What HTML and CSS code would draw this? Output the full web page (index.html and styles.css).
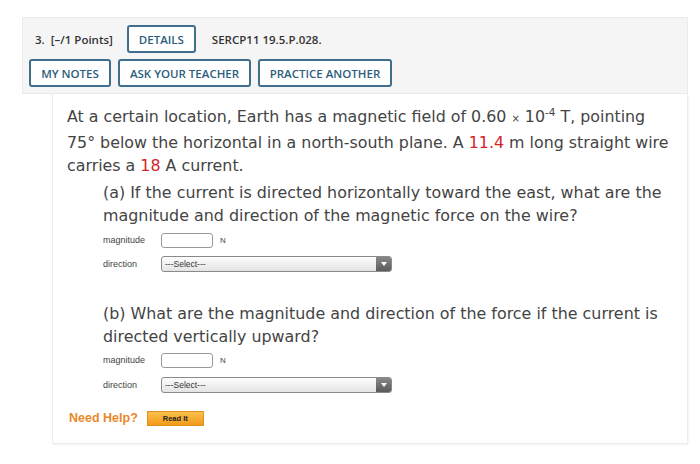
FILE: index.html
```html
<!DOCTYPE html>
<html>
<head>
<meta charset="utf-8">
<link rel="stylesheet" href="styles.css">
</head>
<body>
<div class="question">
  <div class="qhead">
    <div class="row1">
      <span class="qnum">3.</span>
      <span class="points">[&ndash;/1 Points]</span>
      <span class="btn details">DETAILS</span>
      <span class="code">SERCP11 19.5.P.028.</span>
    </div>
    <div class="row2">
      <span class="btn notes">MY NOTES</span>
      <span class="btn ask">ASK YOUR TEACHER</span>
      <span class="btn practice">PRACTICE ANOTHER</span>
    </div>
  </div>
  <div class="qbody">
    <p class="stem">At a certain location, Earth has a magnetic field of 0.60 <span class="times">&times;</span> 10<sup>-4</sup> T, pointing 75&deg; below the horizontal in a north-south plane. A <span class="red">11.4</span> m long straight wire carries a <span class="red">18</span> A current.</p>
    <div class="part">
      <p class="ptext">(a) If the current is directed horizontally toward the east, what are the magnitude and direction of the magnetic force on the wire?</p>
      <div class="field"><span class="lbl">magnitude</span><span class="input"></span><span class="unit">N</span></div>
      <div class="field"><span class="lbl">direction</span><span class="select"><span class="seltext">---Select---</span><span class="arrow"><svg width="6" height="5" viewBox="0 0 6 5"><path d="M0 0H6L3 4Z" fill="#fff"/></svg></span></span></div>
    </div>
    <div class="part partb">
      <p class="ptext">(b) What are the magnitude and direction of the force if the current is directed vertically upward?</p>
      <div class="field"><span class="lbl">magnitude</span><span class="input"></span><span class="unit">N</span></div>
      <div class="field"><span class="lbl">direction</span><span class="select"><span class="seltext">---Select---</span><span class="arrow"><svg width="6" height="5" viewBox="0 0 6 5"><path d="M0 0H6L3 4Z" fill="#fff"/></svg></span></span></div>
    </div>
    <div class="help"><span class="needhelp">Need Help?</span><span class="readit">Read It</span></div>
  </div>
</div>
</body>
</html>
```
FILE: styles.css
```css
html, body { margin: 0; padding: 0; background: #fff; }
body { width: 700px; height: 464px; overflow: hidden; }
.question { margin: 17px 12px 0 22px; }
.qhead {
  background: #f5f5f5;
  border: 1px solid #ebebeb;
  padding: 7px 6px 6px 6px;
  font-family: "Open Sans", sans-serif;
  font-weight: 600;
  font-size: 11.5px;
  color: #333;
}
.row1 { display: flex; align-items: center; height: 28px; }
.qnum { margin-left: 6px; }
.points { margin-left: 6px; }
.details { margin-left: 14px; }
.code { margin-left: 16px; }
.row2 { display: flex; align-items: center; gap: 7px; margin-top: 6px; }
.btn {
  display: inline-flex; align-items: center; justify-content: center;
  height: 28px;
  box-sizing: border-box;
  border: 2px solid #3f6f8c;
  border-radius: 3px;
  background: #fff;
  color: #2c5d7c;
  font-size: 11.5px;
  white-space: nowrap;
  padding: 0;
}
.details { width: 69px; }
.notes { width: 82px; }
.ask { width: 133px; }
.practice { width: 134px; }
.qbody {
  margin-left: 30px;
  border: 1px solid #ececec;
  border-top: none;
  box-shadow: 1px 1px 2px rgba(0,0,0,0.05);
  height: 338px;
  padding: 11px 14px 0 14px;
  font-family: "DejaVu Sans", Verdana, sans-serif;
  color: #444;
}
.stem { margin: 0; font-size: 15.85px; line-height: 23.5px; }
.times { font-size: 10px; }
sup { font-size: 10.5px; line-height: 0; vertical-align: 6px; }
.red { color: #d3242a; }
.part { margin-left: 36px; margin-top: 3px; }
.partb { margin-top: 29px; }
.ptext { margin: 0; font-size: 15.9px; line-height: 23.5px; }
.field { display: flex; align-items: center; height: 17px; margin-top: 4px; font-family: "Liberation Sans", Arial, sans-serif; font-size: 9px; color: #444; }
.partb .field { margin-top: 3px; }
.field + .field { margin-top: 7px; }
.partb .field + .field { margin-top: 8px; }
.lbl { width: 58px; }
.input { width: 52px; height: 15px; border: 1px solid #999; border-radius: 3px; box-sizing: border-box; background: #fff; }
.unit { margin-left: 7px; font-size: 8px; }
.select {
  display: flex; width: 231px; height: 16px; box-sizing: border-box;
  border: 1px solid #8a8a8a; border-radius: 3px;
  background: linear-gradient(#fdfdfd, #e4e4e4);
  overflow: hidden;
}
.seltext { flex: 1; padding-left: 3px; line-height: 14px; font-size: 8.5px; color: #333; }
.arrow { width: 15px; background: linear-gradient(#888, #5a5a5a); display: flex; align-items: center; justify-content: center; }
.help { display: flex; align-items: center; margin-left: 2px; margin-top: 17px; font-family: "Liberation Sans", Arial, sans-serif; }
.needhelp { color: #e8892a; font-weight: bold; font-size: 12.5px; }
.readit {
  margin-left: 9px; width: 57px; height: 15px; box-sizing: border-box;
  border: 1px solid #e09020;
  background: linear-gradient(#fbc14d, #f39a1b);
  font-size: 7.5px; font-weight: bold; color: #222;
  display: flex; align-items: center; justify-content: center;
}
```
